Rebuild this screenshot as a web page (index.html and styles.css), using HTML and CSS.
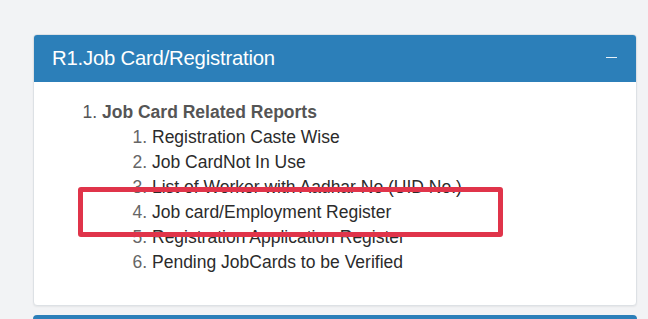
FILE: index.html
```html
<!DOCTYPE html>
<html>
<head>
<meta charset="utf-8">
<link rel="stylesheet" href="styles.css">
</head>
<body>
<div class="page">
  <div class="card">
    <div class="card-header">
      <span class="title">R1.Job Card/Registration</span>
      <span class="toggle"></span>
    </div>
    <div class="card-body">
      <ol class="outer">
        <li><b>Job Card Related Reports</b>
          <ol class="inner">
            <li>Registration Caste Wise</li>
            <li>Job CardNot In Use</li>
            <li>List of Worker with Aadhar No (UID No.)</li>
            <li>Job card/Employment Register</li>
            <li>Registration Application Register</li>
            <li>Pending JobCards to be Verified</li>
          </ol>
        </li>
      </ol>
    </div>
  </div>
  <div class="next-card"></div>
  <div class="highlight"></div>
</div>
</body>
</html>
```
FILE: styles.css
```css
html, body {
  margin: 0;
  padding: 0;
  background: #f2f3f5;
  font-family: "Liberation Sans", Arial, sans-serif;
  overflow: hidden;
}
.page {
  position: relative;
  width: 648px;
  height: 319px;
  padding: 34px 11px 0 33px;
  box-sizing: border-box;
}
.card {
  background: #fff;
  border: 1px solid #dde1e5;
  border-radius: 4px;
  height: 272px;
  box-sizing: border-box;
  box-shadow: 0 1px 2px rgba(0,0,0,0.06);
  overflow: hidden;
}
.card-header {
  background: #2c7fb9;
  color: #fff;
  height: 47px;
  display: flex;
  align-items: center;
  justify-content: space-between;
  padding: 0 19px 0 18px;
}
.title {
  font-size: 20.3px;
  letter-spacing: -0.2px;
  margin-top: -1px;
}
.toggle {
  width: 11px;
  height: 1.5px;
  background: #e8f1f8;
  margin-top: -2px;
}
.card-body {
  padding: 18px 0 0 0;
  color: #333;
}
.outer {
  margin: 0;
  padding-left: 68px;
  font-size: 17.5px;
  line-height: 25px;
}
.outer > li {
  color: #555;
}
.outer > li > b {
  color: #555;
}
.inner {
  margin: 0;
  padding-left: 50px;
  color: #2b2b2b;
}
.inner li::marker {
  color: #666;
}
.next-card {
  margin-top: 9px;
  height: 10px;
  background: #2c7fb9;
  border-radius: 4px 4px 0 0;
}
.highlight {
  position: absolute;
  left: 78px;
  top: 187px;
  width: 425px;
  height: 50px;
  box-sizing: border-box;
  border: 5px solid #e0344a;
  border-radius: 3px;
}
```
